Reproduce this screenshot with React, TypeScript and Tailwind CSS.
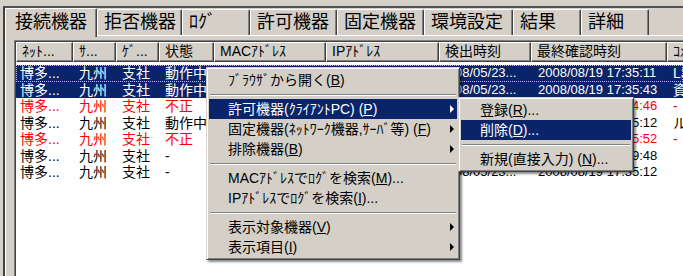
import React from "react";

const cols = [
  { label: "ﾈｯﾄ...", w: "w-[57px]" },
  { label: "ｻ...", w: "w-[43px]" },
  { label: "ｹﾞ...", w: "w-[43px]" },
  { label: "状態", w: "w-[55px]" },
  { label: "MACｱﾄﾞﾚｽ", w: "w-[112px]" },
  { label: "IPｱﾄﾞﾚｽ", w: "w-[113px]" },
  { label: "検出時刻", w: "w-[92px]" },
  { label: "最終確認時刻", w: "w-[136px]" },
  { label: "ｺﾒﾝﾄ", w: "w-[120px]" },
];

const rows = [
  { s: "動作中", last: "2008/08/19 17:35:11", note: "L3ｽｲｯﾁ", sel: true, focus: true },
  { s: "動作中", last: "2008/08/19 17:35:43", note: "資産管理サーバ", sel: true },
  { s: "不正", last: "2008/08/19 17:34:46", note: "-", red: true },
  { s: "動作中", last: "2008/08/19 17:35:12", note: "ルーター" },
  { s: "不正", last: "2008/08/19 17:35:52", note: "-", red: true },
  { s: "-", last: "2008/08/19 17:39:48", note: "" },
  { s: "-", last: "2008/08/19 17:35:12", note: "" },
];

const tabs = [
  { label: "拒否機器", w: "w-[85px]" },
  { label: "ﾛｸﾞ", w: "w-[68px]" },
  { label: "許可機器", w: "w-[87px]" },
  { label: "固定機器", w: "w-[87px]" },
  { label: "環境設定", w: "w-[89px]" },
  { label: "結果", w: "w-[68px]" },
  { label: "詳細", w: "w-[68px]" },
];

const Arrow = ({ white }: { white?: boolean }) => (
  <span
    className={
      "ml-auto mr-[3px] w-0 h-0 border-y-[4px] border-y-transparent border-l-[4px] " +
      (white ? "border-l-white" : "border-l-black")
    }
  />
);

const Item = ({
  children,
  hi,
  arrow,
}: {
  children: React.ReactNode;
  hi?: boolean;
  arrow?: boolean;
}) => (
  <div
    className={
      "flex items-center h-[20px] pl-[19px] text-[14px] whitespace-nowrap " +
      (hi ? "bg-[#0a246a] text-white" : "text-black")
    }
  >
    <span>{children}</span>
    {arrow && <Arrow white={hi} />}
  </div>
);

const Sep = () => (
  <div className="h-[9px] flex items-center px-[1px]">
    <div className="w-full border-t border-b border-t-[#808080] border-b-white" />
  </div>
);

const menuFrame =
  "absolute bg-[#d4d0c8] border border-t-[#d4d0c8] border-l-[#d4d0c8] border-r-[#404040] border-b-[#404040] shadow-[inset_1px_1px_0_#fff,inset_-1px_-1px_0_#808080,2px_2px_2px_rgba(0,0,0,0.45)] p-[2px]";

export default function App() {
  return (
    <div className="w-[683px] h-[276px] overflow-hidden relative bg-[#d4d0c8] pl-[3px] pt-[6px] font-['Liberation_Sans','Noto_Sans_CJK_JP',sans-serif] text-black">
      <div className="h-full border-l-2 border-t-2 border-l-[#404040] border-t-[#505050] flex flex-col">
        {/* tabs */}
        <div className="flex items-end h-[27px] shrink-0">
          <div className="relative z-10 w-[92px] h-[29px] mb-[-2px] bg-[#d4d0c8] border-l border-t border-r border-l-white border-t-white border-r-[#404040] rounded-t-[2px] shadow-[inset_-1px_0_0_#808080] pl-[9px] text-[18px] leading-[26px]">
            接続機器
          </div>
          {tabs.map((t) => (
            <div
              key={t.label}
              className={
                t.w +
                " h-[26px] bg-[#d4d0c8] border-l border-t border-r border-l-white border-t-white border-r-[#404040] rounded-t-[2px] shadow-[inset_-1px_0_0_#808080] pl-[6px] text-[18px] leading-[24px]"
              }
            >
              {t.label}
            </div>
          ))}
        </div>

        {/* panel */}
        <div className="flex-1 border-t border-l border-white pl-[8px] pt-[4px]">
          <div className="h-full border-l border-t border-[#808080]">
            <div className="h-full border-l border-t border-[#404040] bg-white">
              <div className="flex h-[20px] bg-[#d4d0c8]">
                {cols.map((c) => (
                  <div
                    key={c.label}
                    className={
                      c.w +
                      " shrink-0 border border-t-white border-l-white border-r-[#404040] border-b-[#404040] shadow-[inset_-1px_-1px_0_#808080] pl-[5px] text-[14px] leading-[17px] whitespace-nowrap overflow-hidden"
                    }
                  >
                    {c.label}
                  </div>
                ))}
              </div>
              <div className="pt-[3px]">
                {rows.map((r, i) => (
                  <div
                    key={i}
                    className={
                      "flex h-[16.5px] leading-[16.5px] text-[14px] whitespace-nowrap " +
                      (r.sel ? "bg-[#0a246a] text-white " : r.red ? "text-[#ff0000] " : "text-black ") +
                      (r.focus ? "outline-1 outline-dotted outline-[#c8c890] -outline-offset-1" : "")
                    }
                  >
                    <div className="w-[57px] shrink-0 pl-[4px] overflow-hidden">博多...</div>
                    <div className="w-[43px] shrink-0 pl-[6px] overflow-hidden">九州</div>
                    <div className="w-[43px] shrink-0 pl-[6px] overflow-hidden">支社</div>
                    <div className="w-[55px] shrink-0 pl-[6px] overflow-hidden">{r.s}</div>
                    <div className="w-[112px] shrink-0 pl-[6px] overflow-hidden text-[13px]">00-0D-5E-1A-...</div>
                    <div className="w-[113px] shrink-0 pl-[6px] overflow-hidden text-[13px]">192.168.10.2...</div>
                    <div className="w-[92px] shrink-0 pl-[16px] overflow-hidden text-[13px]">08/05/23...</div>
                    <div className="w-[136px] shrink-0 pl-[7px] overflow-hidden text-[13px]">{r.last}</div>
                    <div className="w-[120px] shrink-0 pl-[6px] overflow-hidden">{r.note}</div>
                  </div>
                ))}
              </div>
            </div>
          </div>
        </div>
      </div>

      {/* context menu */}
      <div className={menuFrame + " left-[206px] top-[67px] w-[254px]"}>
        <Item>
          ﾌﾞﾗｳｻﾞから開く(<u>B</u>)
        </Item>
        <Sep />
        <Item hi arrow>
          許可機器(ｸﾗｲｱﾝﾄPC) (<u>P</u>)
        </Item>
        <Item arrow>
          固定機器(ﾈｯﾄﾜｰｸ機器,ｻｰﾊﾞ等) (<u>F</u>)
        </Item>
        <Item arrow>
          排除機器(<u>B</u>)
        </Item>
        <Sep />
        <Item>
          MACｱﾄﾞﾚｽでﾛｸﾞを検索(<u>M</u>)...
        </Item>
        <Item>
          IPｱﾄﾞﾚｽでﾛｸﾞを検索(<u>I</u>)...
        </Item>
        <Sep />
        <Item arrow>
          表示対象機器(<u>V</u>)
        </Item>
        <Item arrow>
          表示項目(<u>I</u>)
        </Item>
      </div>

      {/* submenu */}
      <div className={menuFrame + " left-[458px] top-[97px] w-[176px]"}>
        <Item>
          登録(<u>R</u>)...
        </Item>
        <Item hi>
          削除(<u>D</u>)...
        </Item>
        <Sep />
        <Item>
          新規(直接入力) (<u>N</u>)...
        </Item>
      </div>
    </div>
  );
}
